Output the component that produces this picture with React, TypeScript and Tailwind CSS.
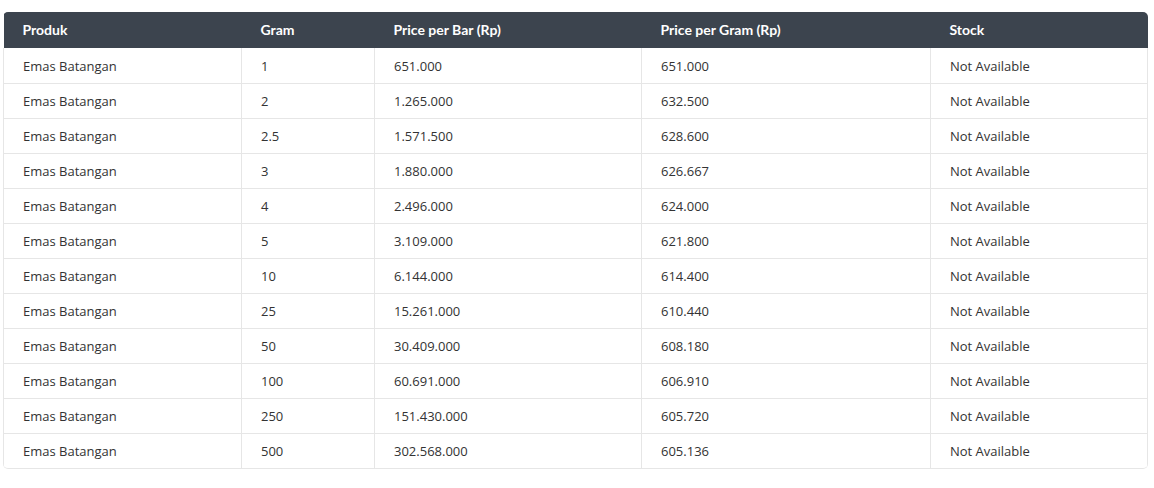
import React from 'react';

const rows: [string, string, string, string][] = [
  ['1', '651.000', '651.000', 'Not Available'],
  ['2', '1.265.000', '632.500', 'Not Available'],
  ['2.5', '1.571.500', '628.600', 'Not Available'],
  ['3', '1.880.000', '626.667', 'Not Available'],
  ['4', '2.496.000', '624.000', 'Not Available'],
  ['5', '3.109.000', '621.800', 'Not Available'],
  ['10', '6.144.000', '614.400', 'Not Available'],
  ['25', '15.261.000', '610.440', 'Not Available'],
  ['50', '30.409.000', '608.180', 'Not Available'],
  ['100', '60.691.000', '606.910', 'Not Available'],
  ['250', '151.430.000', '605.720', 'Not Available'],
  ['500', '302.568.000', '605.136', 'Not Available'],
];

const headers = ['Produk', 'Gram', 'Price per Bar (Rp)', 'Price per Gram (Rp)', 'Stock'];
const widths = ['w-[238px]', 'w-[133px]', 'w-[267px]', 'w-[289px]', 'w-[217px]'];

export default function App() {
  return (
    <div className="bg-white w-[1154px] h-[488px] pt-3 pl-[3px]">
      <div className="w-[1145px] rounded-[5px] border-b border-[#e6e6e6] overflow-hidden">
        <table className="w-full table-fixed border-collapse text-[13px] text-[#333]">
          <colgroup>
            {widths.map((w) => (
              <col key={w} className={w} />
            ))}
          </colgroup>
          <thead>
            <tr className="bg-[#3c444e] h-9">
              {headers.map((h) => (
                <th
                  key={h}
                  className="text-left pl-[19px] pb-[2px] font-bold text-white text-[14px] font-['Lato',sans-serif]"
                >
                  {h}
                </th>
              ))}
            </tr>
          </thead>
          <tbody className="font-['Open_Sans',sans-serif]">
            {rows.map((r, i) => (
              <tr key={i} className="h-[35px] border-t border-[#e6e6e6] first:border-t-0">
                <td className="pl-[19px] pt-[2px] border-l border-[#e6e6e6]">Emas Batangan</td>
                {r.map((c, j) => (
                  <td key={j} className="pl-[19px] pt-[2px] border-x border-[#e6e6e6]">
                    {c}
                  </td>
                ))}
              </tr>
            ))}
          </tbody>
        </table>
      </div>
    </div>
  );
}
